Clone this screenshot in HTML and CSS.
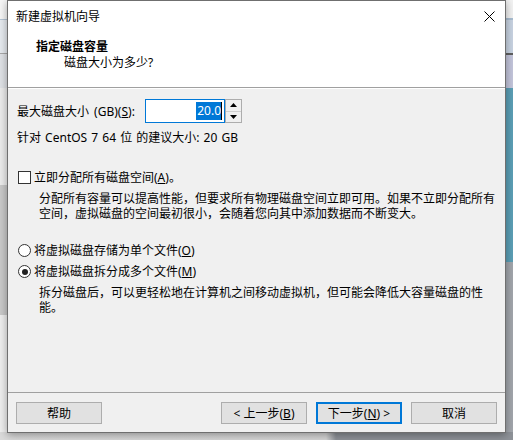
FILE: index.html
```html
<!DOCTYPE html>
<html lang="zh-CN">
<head>
<meta charset="utf-8">
<title>新建虚拟机向导</title>
<link rel="stylesheet" href="styles.css">
</head>
<body>
<div class="window">
  <div class="top">
    <div class="titlebar">
      <span class="title">新建虚拟机向导</span>
      <svg class="close" width="11" height="11" viewBox="0 0 11 11"><path d="M0.5 0.5 L10.5 10.5 M10.5 0.5 L0.5 10.5" stroke="#000" stroke-width="1" fill="none"/></svg>
    </div>
    <div class="header">
      <div class="heading">指定磁盘容量</div>
      <div class="subheading">磁盘大小为多少?</div>
    </div>
  </div>
  <div class="main">
    <div class="size-row">
      <span class="size-label">最大磁盘大小 (GB)(<u>S</u>):</span>
      <div class="spin-input"><span class="sel">20.0</span><span class="caret"></span></div>
      <div class="spin-btns">
        <div class="spin-btn"><svg width="7" height="4" viewBox="0 0 7 4"><path d="M3.5 0 L7 4 L0 4 Z" fill="#000"/></svg></div>
        <div class="spin-btn"><svg width="7" height="4" viewBox="0 0 7 4"><path d="M0 0 L7 0 L3.5 4 Z" fill="#000"/></svg></div>
      </div>
    </div>
    <div class="hint">针对 CentOS 7 64 位 的建议大小: 20 GB</div>

    <div class="option check-row">
      <span class="checkbox"></span>
      <span>立即分配所有磁盘空间(<u>A</u>)。</span>
    </div>
    <div class="desc">分配所有容量可以提高性能，但要求所有物理磁盘空间立即可用。如果不立即分配所有<br>空间，虚拟磁盘的空间最初很小，会随着您向其中添加数据而不断变大。</div>

    <div class="option radio-row first-radio">
      <span class="radio"></span>
      <span>将虚拟磁盘存储为单个文件(<u>O</u>)</span>
    </div>
    <div class="option radio-row second-radio">
      <span class="radio checked"></span>
      <span>将虚拟磁盘拆分成多个文件(<u>M</u>)</span>
    </div>
    <div class="desc">拆分磁盘后，可以更轻松地在计算机之间移动虚拟机，但可能会降低大容量磁盘的性<br>能。</div>
  </div>
  <div class="footer">
    <button class="btn">帮助</button>
    <div class="btn-group">
      <button class="btn">&lt; 上一步(<u>B</u>)</button>
      <button class="btn default">下一步(<u>N</u>) &gt;</button>
      <button class="btn">取消</button>
    </div>
  </div>
</div>
</body>
</html>
```

FILE: styles.css
```css
html, body {
  margin: 0;
  padding: 0;
}

body {
  width: 513px;
  height: 440px;
  overflow: hidden;
  font-family: "Noto Sans", "Noto Sans CJK SC", sans-serif;
  font-size: 12px;
  color: #000;
  background:
    linear-gradient(to right, #dadada 0, #d6d6d6 326px, #8e9298 336px, #8e9298 100%) left bottom / 100% 8px no-repeat,
    linear-gradient(to bottom, #f6f6f6 0 19px, #b5c5d5 19px 20px, #e6eaef 20px 53px, #a8a8a8 53px 54px, #dfe2e6 54px 88px, #ececec 88px 185px, #c9c9c9 185px 315px, #eeeeee 315px) left top / 7px 440px no-repeat,
    linear-gradient(to bottom, #f2f2f2 0 18px, #a9bdd1 18px 20px, #c8d3e2 20px 53px, #5f5f5f 53px 55px, #c3c5db 55px 88px, #5b9fb6 88px 262px, #a2a6ac 262px) right top / 7px 440px no-repeat,
    #d8d8d8;
}

.window {
  box-sizing: border-box;
  margin-left: 7px;
  width: 499px;
  height: 433px;
  border: 1px solid #6f6f6f;
  background: #f0f0f0;
  box-shadow: 0 2px 8px rgba(0, 0, 0, 0.35);
  display: flex;
  flex-direction: column;
}

.top {
  height: 86px;
  background: #fff;
  border-bottom: 1px solid #a0a0a0;
  flex: none;
}

.titlebar {
  height: 30px;
  display: flex;
  align-items: center;
  justify-content: space-between;
  padding-left: 8px;
}

.title {
  line-height: 15px;
}

.close {
  margin-right: 10px;
  display: block;
}

.header {
  padding: 8px 0 0 28px;
  line-height: 15px;
}

.heading {
  font-weight: bold;
}

.subheading {
  padding-left: 28px;
  margin-top: 1px;
}

.main {
  flex: 1;
  border-top: 1px solid #fff;
  padding: 10px 0 0 9px;
  line-height: 15px;
}

.size-row {
  display: flex;
  align-items: center;
  height: 24px;
}

.size-label {
  width: 128px;
  flex: none;
  white-space: nowrap;
  word-spacing: 2px;
}

.spin-input {
  box-sizing: border-box;
  width: 80px;
  height: 24px;
  border: 1px solid #0078d7;
  background: #fff;
  display: flex;
  align-items: center;
  justify-content: flex-end;
  padding-right: 2px;
}

.sel {
  background: #0078d7;
  color: #fff;
  line-height: 18px;
  padding: 0 0 0 1px;
}

.caret {
  width: 1px;
  height: 18px;
  background: #000;
}

.spin-btns {
  box-sizing: border-box;
  width: 17px;
  height: 24px;
  border: 1px solid #adadad;
  display: flex;
  flex-direction: column;
  background: #f0f0f0;
}

.spin-btn {
  flex: 1;
  display: flex;
  align-items: center;
  justify-content: center;
}

.spin-btn + .spin-btn {
  border-top: 1px solid #cfcfcf;
}

.spin-btn svg {
  display: block;
}

.hint {
  margin-top: 7px;
  word-spacing: 1px;
}

.option {
  display: flex;
  align-items: center;
}

.check-row {
  margin-top: 25px;
}

.checkbox {
  box-sizing: border-box;
  width: 13px;
  height: 13px;
  border: 1px solid #333;
  background: #fff;
  margin: 0 3px 0 1px;
  flex: none;
}

.desc {
  margin-top: 6px;
  padding-left: 22px;
  white-space: nowrap;
}

.first-radio {
  margin-top: 22px;
}

.second-radio {
  margin-top: 6px;
}

.radio {
  box-sizing: border-box;
  width: 13px;
  height: 13px;
  border: 1px solid #333;
  border-radius: 50%;
  background: #fff;
  margin: 0 3px 0 1px;
  flex: none;
  display: flex;
  align-items: center;
  justify-content: center;
}

.radio.checked::after {
  content: "";
  width: 6px;
  height: 6px;
  border-radius: 50%;
  background: #222;
}

.footer {
  flex: none;
  border-top: 1px solid #a0a0a0;
  padding: 9px 8px 8px 8px;
  display: flex;
  align-items: center;
}

.btn-group {
  margin-left: auto;
  display: flex;
  gap: 9px;
}

.btn {
  box-sizing: border-box;
  width: 86px;
  height: 22px;
  padding: 0;
  border: 1px solid #adadad;
  background: #e1e1e1;
  font-family: "Noto Sans", "Noto Sans CJK SC", sans-serif;
  font-size: 12px;
  line-height: 15px;
  color: #000;
}

.btn.default {
  border: 2px solid #0078d7;
}
```
